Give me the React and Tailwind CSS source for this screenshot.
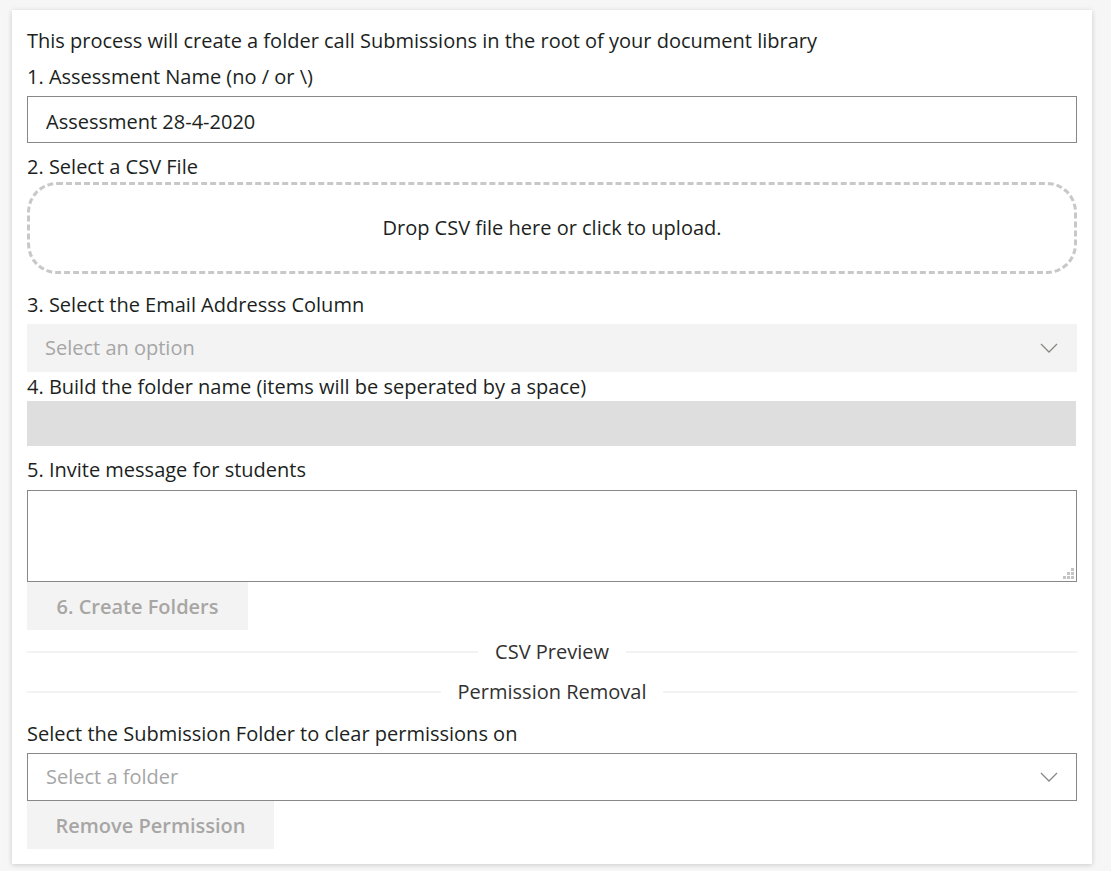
import React, { useState } from "react";

function Chevron() {
  return (
    <svg width="18" height="10" viewBox="0 0 18 10" fill="none" className="shrink-0">
      <path d="M1 1l8 8 8-8" stroke="#8a8886" strokeWidth="1.3" />
    </svg>
  );
}

function Divider({ children }) {
  return (
    <div className="flex items-center h-[40px]">
      <div className="flex-1 h-[2px] bg-[#f3f3f3]" />
      <span className="px-[17px] text-[#323130]">{children}</span>
      <div className="flex-1 h-[2px] bg-[#f3f3f3]" />
    </div>
  );
}

// the little dotted grip in the textarea corner
function Grip() {
  const dots = [
    [8, 0],
    [4, 4],
    [8, 4],
    [0, 8],
    [4, 8],
    [8, 8],
  ];
  return (
    <svg width="11" height="11" viewBox="0 0 11 11" className="absolute right-[3px] bottom-[3px]">
      {dots.map(([x, y]) => (
        <rect key={`${x}-${y}`} x={x} y={y} width="3" height="3" fill="#c4c4c4" />
      ))}
    </svg>
  );
}

export default function App() {
  const [name, setName] = useState("Assessment 28-4-2020");
  const [message, setMessage] = useState("");

  return (
    <div
      className="min-h-[871px] bg-[#f6f6f6] pt-[10px] px-[12px] pb-[7px] text-[20px] text-[#201f1e]"
      style={{ fontFamily: '"Open Sans", "Noto Sans", sans-serif' }}
    >
      <div className="w-[1080px] bg-white shadow-[0_1px_5px_rgba(0,0,0,0.18)] px-[15px] pt-[17px] pb-[15px]">
        <div className="leading-[28px] mb-[8px]">
          This process will create a folder call Submissions in the root of your document library
        </div>

        <label className="block leading-[28px] mb-[5px]">1. Assessment Name (no / or \)</label>
        <input
          type="text"
          value={name}
          onChange={(e) => setName(e.target.value)}
          className="block w-full h-[47px] border border-[#8a8886] px-[18px] pt-[3px] outline-none text-[#201f1e]"
        />

        <label className="block leading-[28px] mt-[10px] mb-[1px]">2. Select a CSV File</label>
        <div className="h-[92px] border-[3px] border-dashed border-[#c8c8c8] rounded-[30px] flex items-center justify-center text-[#201f1e]">
          Drop CSV file here or click to upload.
        </div>

        <label className="block leading-[28px] mt-[17px] mb-[5px]">3. Select the Email Addresss Column</label>
        <div className="h-[48px] bg-[#f3f3f3] flex items-center justify-between pl-[18px] pr-[19px] text-[#a6a6a6]">
          <span>Select an option</span>
          <Chevron />
        </div>

        <label className="block leading-[28px] mt-[1px]">4. Build the folder name (items will be seperated by a space)</label>
        <div className="h-[45px] bg-[#dedede] mr-[1px]" />

        <label className="block leading-[28px] mt-[10px] mb-[6px]">5. Invite message for students</label>
        <div className="relative">
          <textarea
            value={message}
            onChange={(e) => setMessage(e.target.value)}
            className="block w-full h-[92px] border border-[#8a8886] outline-none px-[10px] py-[6px] resize-none"
          />
          <Grip />
        </div>
        <button
          disabled
          className="block h-[48px] w-[221px] pt-[2px] bg-[#f3f3f3] text-[#a8a6a4] font-semibold"
        >
          6. Create Folders
        </button>

        <div className="mt-[2px]">
          <Divider>CSV Preview</Divider>
          <Divider>Permission Removal</Divider>
        </div>

        <label className="block leading-[28px] mt-[8px] mb-[5px]">Select the Submission Folder to clear permissions on</label>
        <div className="h-[48px] border border-[#8a8886] flex items-center justify-between pl-[18px] pr-[18px] text-[#a6a6a6]">
          <span>Select a folder</span>
          <Chevron />
        </div>
        <button
          disabled
          className="block h-[48px] w-[247px] pt-[2px] bg-[#f3f3f3] text-[#a8a6a4] font-semibold"
        >
          Remove Permission
        </button>
      </div>
    </div>
  );
}
